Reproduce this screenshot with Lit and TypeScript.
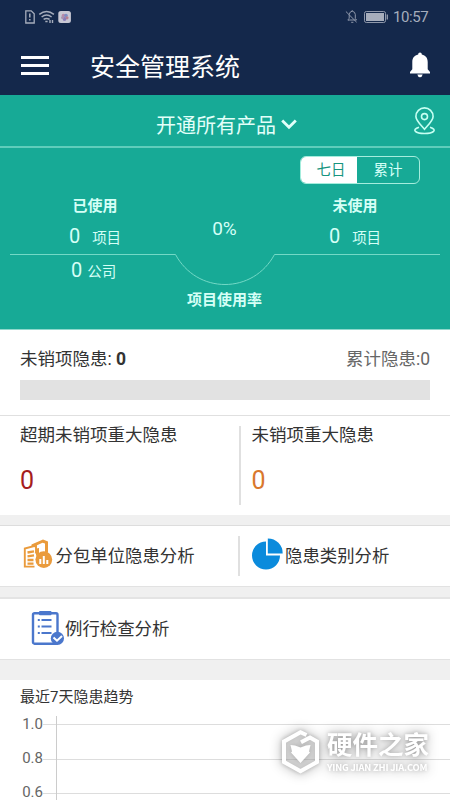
import { LitElement, html, css, svg } from "lit";
import { customElement } from "lit/decorators.js";

@customElement("status-bar")
class StatusBar extends LitElement {
  static styles = css`
    :host { display: flex; height: 34px; align-items: center; color: #a6adbc; font-size: 15px; line-height: 34px; }
    .left { margin-left: 24px; }
    .right { margin-left: auto; margin-right: 5px; }
    .time { margin-right: 22px; width: 35px; white-space: nowrap; letter-spacing: -0.4px; }
    svg { display: block; }
  `;
  render() {
    return html`
      <svg class="left" width="50" height="34" viewBox="0 0 50 34" fill="none" stroke="#a6adbc">
        <path stroke-width="1.300" d="M1.800 10.800h5.400l3 3v9.200H1.800z" />
        <path stroke-width="1.500" d="M5.800 13.500v4M5.800 19v1.600" />
        <path stroke-width="1.500" d="M15.300 14.300q7.300-5.800 14.600 0M17.600 17q5-3.800 10 0M19.600 19.400q3-2 6 0" />
        <path stroke-width="1.400" d="M21.300 21.500h2.300M26 20v3M28.500 20v3" />
        <rect x="34.300" y="11" width="12.600" height="12" rx="2.500" fill="#c8c8d4" stroke="none" />
        <g stroke="none"><circle cx="39.500" cy="15.500" r="1.800" fill="#b98aa8" /><circle cx="42" cy="15.500" r="1.800" fill="#7f8ec4" />
        <circle cx="43" cy="17.800" r="1.600" fill="#b9808f" /><circle cx="40.500" cy="19" r="1.900" fill="#8a7dba" /><circle cx="38.500" cy="17.500" r="1.500" fill="#a892b0" /></g>
      </svg>
      <svg class="right" width="44" height="34" viewBox="0 0 44 34" fill="none" stroke="#8f98ab">
        <path d="M4.200 20.500v-1l1-1.200v-3.800q.5-3 3-3.300v-1M8.200 11.200q3 .5 3.100 3.300v4l1.200 1.500H4M7.200 22.300h2.200M1.900 11.500l10.700 10.700" stroke-width="1" />
        <rect x="20.500" y="11.500" width="21" height="11" rx="1.800" stroke-width="1" />
        <rect x="22" y="13" width="18" height="8" fill="#a6adbc" stroke="none" />
        <path d="M43.300 14.500v5" stroke-width="1.400" />
      </svg>
      <span class="time">10:57</span>`;
  }
}

@customElement("app-header")
class AppHeader extends LitElement {
  static styles = css`
    :host { display: flex; height: 61px; align-items: center; padding: 0 19px 0 21px; color: #fff; }
    .menu { display: flex; flex-direction: column; gap: 5px; width: 28px; margin-top: 1px; }
    .bar { height: 3px; background: #fff; }
    .title { margin-left: 41px; margin-top: 6px; flex: 1; font-size: 25px; line-height: 40px; }
    svg { display: block; }
  `;
  render() {
    return html`
      <div class="menu"><div class="bar"></div><div class="bar"></div><div class="bar"></div></div>
      <div class="title">安全管理系统</div>
      <svg width="22" height="26" viewBox="0 0 22 26" fill="#fff">
        <path d="M11 .5c1.100 0 1.700.700 1.800 1.900 3.800.800 5.900 3.600 5.900 7.500v7.300l2.300 2.900V21.400H1v-1.300l2.300-2.900V9.900c0-3.900 2.100-6.700 5.900-7.500C9.300 1.200 9.900.500 11 .500zM8.300 22.600h5.400Q13 25.300 11 25.300 9 25.300 8.300 22.600z" />
      </svg>`;
  }
}

@customElement("usage-panel")
class UsagePanel extends LitElement {
  static styles = css`
    :host { display: block; height: 234px; background: #17aa96; color: #d5fff6; border-bottom: 1px solid #8fd8cc; }
    .picker { display: flex; height: 51px; border-bottom: 2px solid #5fcdbb; align-items: center; }
    .product { margin-left: 156px; font-size: 20px; line-height: 30px; margin-top: 10px; color: #e2fff9; }
    .chev { margin: 7px 0 0 5px; }
    .pin { margin: 0 14px 0 auto; }
    svg { display: block; }
    .toggle { display: flex; width: 118px; height: 26px; margin: 8px 0 0 300px; border: 1px solid #a5eddd; border-radius: 6px; overflow: hidden; font-size: 14.500px; line-height: 27px; }
    .seg { flex: 1; text-align: center; }
    .on { flex: 0 0 56px; background: #fff; color: #17957f; text-indent: 4px; }
    .cols { display: grid; grid-template-columns: 190px 70px 190px; height: 70px; text-align: center; }
    .name { font-size: 15px; font-weight: 700; line-height: 22px; margin-top: 11px; }
    .count { display: flex; justify-content: center; align-items: baseline; font-size: 20px; line-height: 24px; margin-top: 7px; }
    .unit { font-size: 14.500px; margin-left: 12px; }
    .rate { font-size: 19px; line-height: 24px; margin: 33px 1px 0 0; }
    .curve { height: 32px; }
    .bottom { display: grid; grid-template-columns: 187px 76px; margin-top: -28px; }
    .company { display: flex; align-items: baseline; padding-left: 71px; font-size: 20px; line-height: 24px; }
    .company .unit { margin-left: 5px; }
    .label { font-size: 15px; font-weight: 700; line-height: 22px; margin-top: 31px; white-space: nowrap; }
  `;
  render() {
    return html`
      <div class="picker">
        <div class="product">开通所有产品</div>
        <svg class="chev" width="16" height="11" viewBox="0 0 16 11" fill="none" stroke="#e2fff9" stroke-width="2.800"><path d="M1.200 1.500 8 8.300l6.800-6.800" /></svg>
        <svg class="pin" width="23" height="28" viewBox="0 0 23 28" fill="none" stroke="#c6fff2" stroke-width="1.600">
          <path d="M11.500 22.200C8 18 2.900 13.700 2.900 9.500a8.600 8.600 0 0 1 17.200 0c0 4.200-5.100 8.500-8.600 12.700z" />
          <circle cx="11.500" cy="9.600" r="3" />
          <path d="M6 20.300c-8 2.600-3.500 6.200 5.500 6.200s13.500-3.600 5.500-6.200" />
        </svg>
      </div>
      <div class="toggle"><div class="seg on">七日</div><div class="seg">累计</div></div>
      <div class="cols">
        <div><div class="name">已使用</div><div class="count"><span>0</span><span class="unit">项目</span></div></div>
        <div class="rate">0%</div>
        <div><div class="name">未使用</div><div class="count"><span>0</span><span class="unit">项目</span></div></div>
      </div>
      <svg class="curve" width="450" height="32" viewBox="0 254 450 32" fill="none" stroke="#73d9c6"><path d="M10 254.500H175.500C186 274 205 284.500 225 284.500S264 274 274.500 254.500H440" /></svg>
      <div class="bottom">
        <div class="company"><span>0</span><span class="unit">公司</span></div>
        <div class="label">项目使用率</div>
      </div>`;
  }
}

@customElement("hazard-summary")
class HazardSummary extends LitElement {
  static styles = css`
    :host { display: block; background: #fff; color: #333; font-size: 17.500px; }
    .total { display: flex; flex-direction: column; height: 86px; border-bottom: 1px solid #e0e0e0; padding: 0 20px; box-sizing: border-box; }
    .line { display: flex; justify-content: space-between; line-height: 26px; margin: 16px 0 8px; }
    .sum { color: #666; }
    .bar { height: 20px; background: #e2e2e2; }
    .pair { display: grid; grid-template-columns: 239px 2px 1fr; height: 99px; }
    .cell { padding: 6px 0 0 20px; line-height: 26px; }
    .cell.second { padding-left: 10.500px; }
    .split { height: 79px; margin: 10px 0 0; background: #e0e0e0; }
    .big { font-size: 25px; line-height: 30px; margin-top: 18px; color: #a51d1d; }
    .orange { color: #d9782c; }
  `;
  render() {
    return html`
      <div class="total">
        <div class="line"><span>未销项隐患: <b>0</b></span><span class="sum">累计隐患:0</span></div>
        <div class="bar"></div>
      </div>
      <div class="pair">
        <div class="cell">超期未销项重大隐患<div class="big">0</div></div>
        <div class="split"></div>
        <div class="cell second">未销项重大隐患<div class="big orange">0</div></div>
      </div>`;
  }
}

@customElement("analysis-links")
class AnalysisLinks extends LitElement {
  static styles = css`
    :host { display: block; padding: 10px 0 20px; background: #f0f0f0; font-size: 17.400px; color: #333; }
    .row { display: flex; align-items: center; height: 60px; background: #fff; border-top: 1px solid #ddd; border-bottom: 1px solid #e2e2e2; }
    .row + .row { margin-top: 10px; border-top: 2px solid #e4e4e4; height: 60px; }
    .link { display: flex; align-items: center; line-height: 26px; }
    .first { width: 214px; padding-left: 23px; gap: 2.500px; }
    .split { width: 2px; height: 40px; margin-left: 1px; background: #e0e0e0; }
    .second { padding-left: 11.500px; gap: 2.500px; }
    .check { padding-left: 31px; gap: 0; }
    .up { margin-top: -4px; }
    .check .up { margin-top: -2px; }
    svg { display: block; }
  `;
  render() {
    return html`
      <div class="row">
        <div class="link first">
          <svg class="up" width="30" height="30" viewBox="0 0 30 30">
            <path fill="#ea9b3c" d="M8.500 5.500 20 .500l5 2v11h-3V4.500l-2.500-.800L13.500 6.500v3L16 9v6l-3 2V8.500l-4.500-1z" />
            <path fill="none" stroke="#ea9b3c" stroke-width="1.900" d="M1.800 28.500V9.500L13 6.500v8M1 27.600h10.500" />
            <path fill="none" stroke="#ea9b3c" stroke-width="2.300" d="M4.500 13.500 11 12.300M4.500 17.300 11 16.400M4.500 21H10.500M4.500 24.600H10.500" />
            <circle cx="20.800" cy="20.600" r="8.400" fill="#ea9b3c" />
            <path fill="none" stroke="#fff" stroke-width="2" d="M17.300 25v-5M20.800 25v-8M24.300 25v-4" />
          </svg>
          <span>分包单位隐患分析</span>
        </div>
        <div class="split"></div>
        <div class="link second">
          <svg class="up" width="31" height="32" viewBox="0 0 31 32" fill="#0b8bdc">
            <path d="M14 3.500V17.500H28A14 14 0 1 1 14 3.500z" /><path d="M15.800.500A14.800 14.800 0 0 1 30.700 15.500H15.800z" />
          </svg>
          <span>隐患类别分析</span>
        </div>
      </div>
      <div class="row">
        <div class="link check">
          <svg class="up" width="34" height="36" viewBox="0 0 34 36" fill="none" stroke="#4b77cc">
            <rect x="2" y="3.200" width="24.500" height="30.500" rx="1.500" stroke-width="2.400" />
            <rect x="8" y="1" width="12.500" height="4.200" rx="1" fill="#4b77cc" stroke="none" />
            <path stroke-width="2" d="M6.800 10h2M10.500 10h10M6.800 16.600h2M10.500 16.600h10M6.800 23h2M10.500 23h10" />
            <circle cx="26.400" cy="28.400" r="6.600" fill="#4b77cc" stroke="none" />
            <path stroke="#fff" stroke-width="2" d="m22.500 27.500 3.500 3.200 5-4.700" />
          </svg>
          <span>例行检查分析</span>
        </div>
      </div>`;
  }
}

@customElement("trend-chart")
class TrendChart extends LitElement {
  static styles = css`
    :host { display: block; height: 120px; overflow: hidden; background: #fff; color: #333; }
    .title { font-size: 15px; line-height: 24px; padding: 5px 0 0 20px; }
    .plot { display: grid; grid-template-columns: 43px 1fr; height: 91px; }
    .ticks { padding-top: 8px; font-size: 15px; line-height: 14px; color: #666; text-align: right; }
    .tick { height: 34px; }
    .tick:last-child { height: 14px; }
    svg { display: block; }
  `;
  ticks = [1, 0.8, 0.6];
  render() {
    return html`
      <div class="title">最近7天隐患趋势</div>
      <div class="plot">
        <div class="ticks">${this.ticks.map((t) => html`<div class="tick">${t.toFixed(1)}</div>`)}</div>
        <svg width="407" height="91" viewBox="0 0 407 91" stroke="#ddd">
          ${[15.5, 50.5, 84.5].map((y) => svg`<path d="M0 ${y}H407" />`)}
          <path stroke="#ccc" d="M13.500 7V91" />
        </svg>
      </div>`;
  }
}

@customElement("site-mark")
class SiteMark extends LitElement {
  static styles = css`
    :host { display: flex; gap: 6px; align-items: flex-start; color: #fff; filter: drop-shadow(0 0 2px rgba(0, 0, 0, 0.22)) drop-shadow(0 0 6px rgba(0, 0, 0, 0.36)); }
    svg { display: block; }
    .text { display: flex; flex-direction: column; gap: 0; }
    .cn { font-size: 25.500px; line-height: 31px; font-weight: 700; white-space: nowrap; }
    .en { font-family: "Noto Sans CJK SC", sans-serif; font-size: 9.400px; font-weight: 700; line-height: 12px; white-space: nowrap; letter-spacing: -0.2px; }
  `;
  render() {
    return html`
      <svg width="40" height="44" viewBox="0 0 40 44">
        <path fill="#fff" fill-opacity="0.25" d="M19.500 2.300 3 11.500v20.500l16.500 9.300 16.500-9.300V11.500z" />
        <path fill="none" stroke="#fff" stroke-width="4" d="M25.500 5 19.500 2.300 3 11.500v20.500l16.500 9.300 16.500-9.300V11.500L29 7.500 20 12.300" />
        <path fill="#fff" d="m9.500 15 4.500.500 5.500 2 5.500-2 4.500-.500-1.500 6.500 1 1-9.500 10.500L10 22.500l1-1z" />
      </svg>
      <div class="text"><div class="cn">硬件之家</div><div class="en">YING JIAN ZHI JIA.COM</div></div>`;
  }
}

@customElement("app-root")
class AppRoot extends LitElement {
  static styles = css`
    :host { display: block; position: relative; width: 450px; height: 800px; overflow: hidden; background: #fff; font-family: Roboto, "Noto Sans CJK SC", sans-serif; }
    .top { background: #14284b; }
    .mark { position: absolute; left: 281px; top: 730px; }
  `;
  render() {
    return html`
      <div class="top"><status-bar></status-bar><app-header></app-header></div>
      <usage-panel></usage-panel>
      <hazard-summary></hazard-summary>
      <analysis-links></analysis-links>
      <trend-chart></trend-chart>
      <site-mark class="mark"></site-mark>`;
  }
}
